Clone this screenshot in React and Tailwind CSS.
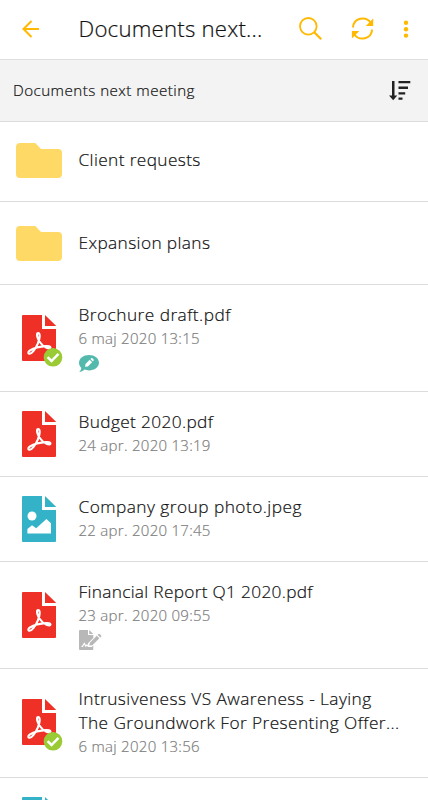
function FileIcon({ type, checked }) {
  const color = type === 'pdf' ? '#ef3026' : '#34b3c8';
  return (
    <svg className="block h-12 w-[42px] overflow-visible" viewBox="0 0 42 48">
      <path d="M1 0H20V14H34V45a1 1 0 0 1-1 1H1a1 1 0 0 1-1-1V1a1 1 0 0 1 1-1Z" fill={color} />
      <path d="M23 0L34.3 11H23Z" fill={color} />
      {type === 'pdf' ? (
        <g fill="none" stroke="#fff" strokeWidth="2.1" strokeLinejoin="round" strokeLinecap="round">
          <path d="M18 27.2C15.6 24.4 13.8 18.4 16 18.1C18.6 18 18 23.5 15.8 28.6C13.8 33.2 9.5 40 6.8 38.6C4.6 37 9.7 33.8 15 32.5C20.5 31.2 28.4 30.2 28.5 32.5C28.4 34.9 21.4 32.4 18 27.2" />
        </g>
      ) : (
        <g fill="#fff">
          <circle cx="10" cy="20" r="4.5" />
          <path d="M5.4 33L10 29.2L14.2 32.2L24.4 23L29 27.2V37.5H5.4Z" />
        </g>
      )}
      {checked && (
        <g>
          <circle cx="31" cy="42.3" r="9.3" fill="#9acb35" />
          <path d="M25.6 42.2l3.9 3.8 7-7.2" fill="none" stroke="#fff" strokeWidth="2.5" />
        </g>
      )}
    </svg>
  );
}

function FolderIcon() {
  return (
    <svg className="block h-[35px] w-[46px]" viewBox="0 0 46 35">
      <path d="M4 0H19.2L25 6H42a4 4 0 0 1 4 4V31a4 4 0 0 1-4 4H4a4 4 0 0 1-4-4V4a4 4 0 0 1 4-4Z" fill="#ffd966" />
    </svg>
  );
}

function CommentIcon() {
  return (
    <svg className="block h-[18px] w-5" viewBox="0 0 20 18">
      <path d="M10 0C15.5 0 20 3.4 20 7.7S15.5 15.4 10 15.4C8.4 15.4 6.9 15.1 5.5 14.6C4 16 2.2 17 .3 17C1.4 15.7 2.1 14.4 2.3 12.9C.8 11.5 0 9.7 0 7.7C0 3.4 4.5 0 10 0Z" fill="#53b9ad" />
      <path d="M6 11.8l.5-2.8 4.2-4.2 2.4 2.4-4.2 4.2ZM11.5 4l.7-.7q.6-.6 1.2 0l1.2 1.2q.5.6 0 1.1l-.7.8Z" fill="#fff" />
    </svg>
  );
}

function SignIcon() {
  return (
    <svg className="block h-5 w-[23px]" viewBox="0 0 23 20">
      <path d="M1 0H9V5H14.3V8L9 13.2V17H12.8L14.3 15.5V19a1 1 0 0 1-1 1H1a1 1 0 0 1-1-1V1a1 1 0 0 1 1-1ZM10.2 0L14.3 4H10.2Z" fill="#b8b8b8" />
      <path d="M10.3 15.7l.5-3 7-7 2.6 2.6-7 7ZM18.7 4.9l.8-.8q.6-.6 1.2 0l1.4 1.4q.6.6 0 1.2l-.8.8Z" fill="#b8b8b8" />
      <path d="M2.5 16.3H3.5L5.4 13.5L6.8 16.2L8 14.8L9.3 16.3H12" fill="none" stroke="#fff" strokeWidth="1.2" />
    </svg>
  );
}

function Row({ className, icon, title, date, tag, checked, tracking = 'tracking-[0.42px]' }) {
  return (
    <li className={`flex shrink-0 border-b border-[#dcdcdc] ${className}`}>
      <div className={`w-[79px] shrink-0 pl-[22px] ${tag || checked ? 'pt-[30px]' : 'pt-[19px]'}`}>
        <FileIcon type={icon} checked={checked} />
      </div>
      <div className="-ml-[0.5px] pt-[18px]">
        <h2 className={`whitespace-pre text-[17.3px] font-light leading-6 text-[#111] [-webkit-text-stroke:0.2px_#111] ${tracking}`}>{title}</h2>
        <p className="-mt-px whitespace-nowrap text-[15px] font-light leading-6 tracking-[0.28px] text-[#808080] [-webkit-text-stroke:0.2px_#808080]">{date}</p>
        {tag === 'comment' && <div className="mt-[5px]"><CommentIcon /></div>}
        {tag === 'sign' && <div className="mt-[3px]"><SignIcon /></div>}
      </div>
    </li>
  );
}

function FolderRow({ className, title }) {
  return (
    <li className={`flex shrink-0 border-b border-[#dcdcdc] ${className}`}>
      <div className="w-[78.5px] shrink-0 pl-4"><FolderIcon /></div>
      <h2 className="mt-[5px] whitespace-nowrap text-[17.3px] font-light leading-6 tracking-[0.38px] text-[#111] [-webkit-text-stroke:0.2px_#111]">{title}</h2>
    </li>
  );
}

export default function App() {
  return (
    <main className="flex h-[800px] w-[428px] flex-col overflow-hidden bg-white font-['Open_Sans',sans-serif]">
      <header className="flex h-[60px] shrink-0 items-center border-b border-[#dedede] pb-[2px]">
        <svg className="ml-[22px] h-[18px] w-[18px]" viewBox="0 0 18 18" fill="none" stroke="#ffb900" strokeWidth="2">
          <path d="M17 9H1.5M9.5 1L1.5 9L9.5 17" />
        </svg>
        <h1 className="ml-[38.5px] w-[220.5px] shrink-0 whitespace-nowrap text-[22.2px] font-light leading-8 tracking-[0.22px] text-[#111] [-webkit-text-stroke:0.2px_#111]">Documents next...</h1>
        <svg className="h-6 w-6 shrink-0" viewBox="0 0 24 24" fill="none" stroke="#ffb900" strokeWidth="1.8">
          <circle cx="9.3" cy="9.3" r="8.3" /><path d="M15.2 15.2l7 7" strokeWidth="2.2" />
        </svg>
        <svg className="ml-7 h-6 w-6 shrink-0" viewBox="0 0 24 24" fill="none" stroke="#ffb900" strokeWidth="2">
          <path d="M2 10.5C2.5 1.2 14.5-1.8 20 6M21.1 12.5C20.5 21.9 8.5 24.9 3 17" />
          <path d="M22.2 1.6V9h-7.4ZM.9 21.4V14h7.4Z" fill="#ffb900" stroke="none" />
        </svg>
        <svg className="ml-7 h-5 w-[6px] shrink-0" viewBox="0 0 6 20" fill="#ffb900">
          <circle cx="3" cy="3.8" r="2.2" /><circle cx="3" cy="10.2" r="2.2" /><circle cx="3" cy="16.6" r="2.2" />
        </svg>
      </header>
      <section className="flex h-[62px] shrink-0 items-center border-b border-[#dcdcdc] bg-[#f3f3f3] pl-[13px] pr-[17px]">
        <span className="mb-[2px] flex-1 text-[15.2px] font-light leading-6 tracking-[0.45px] text-[#111] [-webkit-text-stroke:0.2px_#111]">Documents next meeting</span>
        <svg className="h-[21px] w-[22px]" viewBox="0 0 22 21" fill="#222">
          <path d="M3 1H5.5V15.5H8.3L4.2 20.3L0 15.5H3ZM9.5 1H21.3V3.3H9.5ZM9.5 6.6H19V9H9.5ZM9.5 12.2H16.2V14.4H9.5ZM9.5 17.5H13.5V19.7H9.5Z" />
        </svg>
      </section>
      <ul className="flex flex-col">
        <FolderRow className="h-20 pt-[21px]" title="Client requests" />
        <FolderRow className="h-[83px] pt-6" title="Expansion plans" />
        <Row className="h-[107px]" icon="pdf" title="Brochure draft.pdf" date="6 maj 2020 13:15" tag="comment" checked tracking="tracking-[0.46px]" />
        <Row className="h-[85px]" icon="pdf" title="Budget 2020.pdf" date="24 apr. 2020 13:19" tracking="tracking-[0.36px]" />
        <Row className="h-[85px]" icon="image" title="Company group photo.jpeg" date="22 apr. 2020 17:45" tracking="tracking-[0.46px]" />
        <Row className="h-[107px]" icon="pdf" title="Financial Report Q1 2020.pdf" date="23 apr. 2020 09:55" tag="sign" tracking="tracking-[0.3px]" />
        <Row className="h-[109px]" icon="pdf" title={'Intrusiveness VS Awareness - Laying\nThe Groundwork For Presenting Offer...'} date="6 maj 2020 13:56" checked />
        <Row className="h-[85px]" icon="image" title="" date="" />
      </ul>
    </main>
  );
}
